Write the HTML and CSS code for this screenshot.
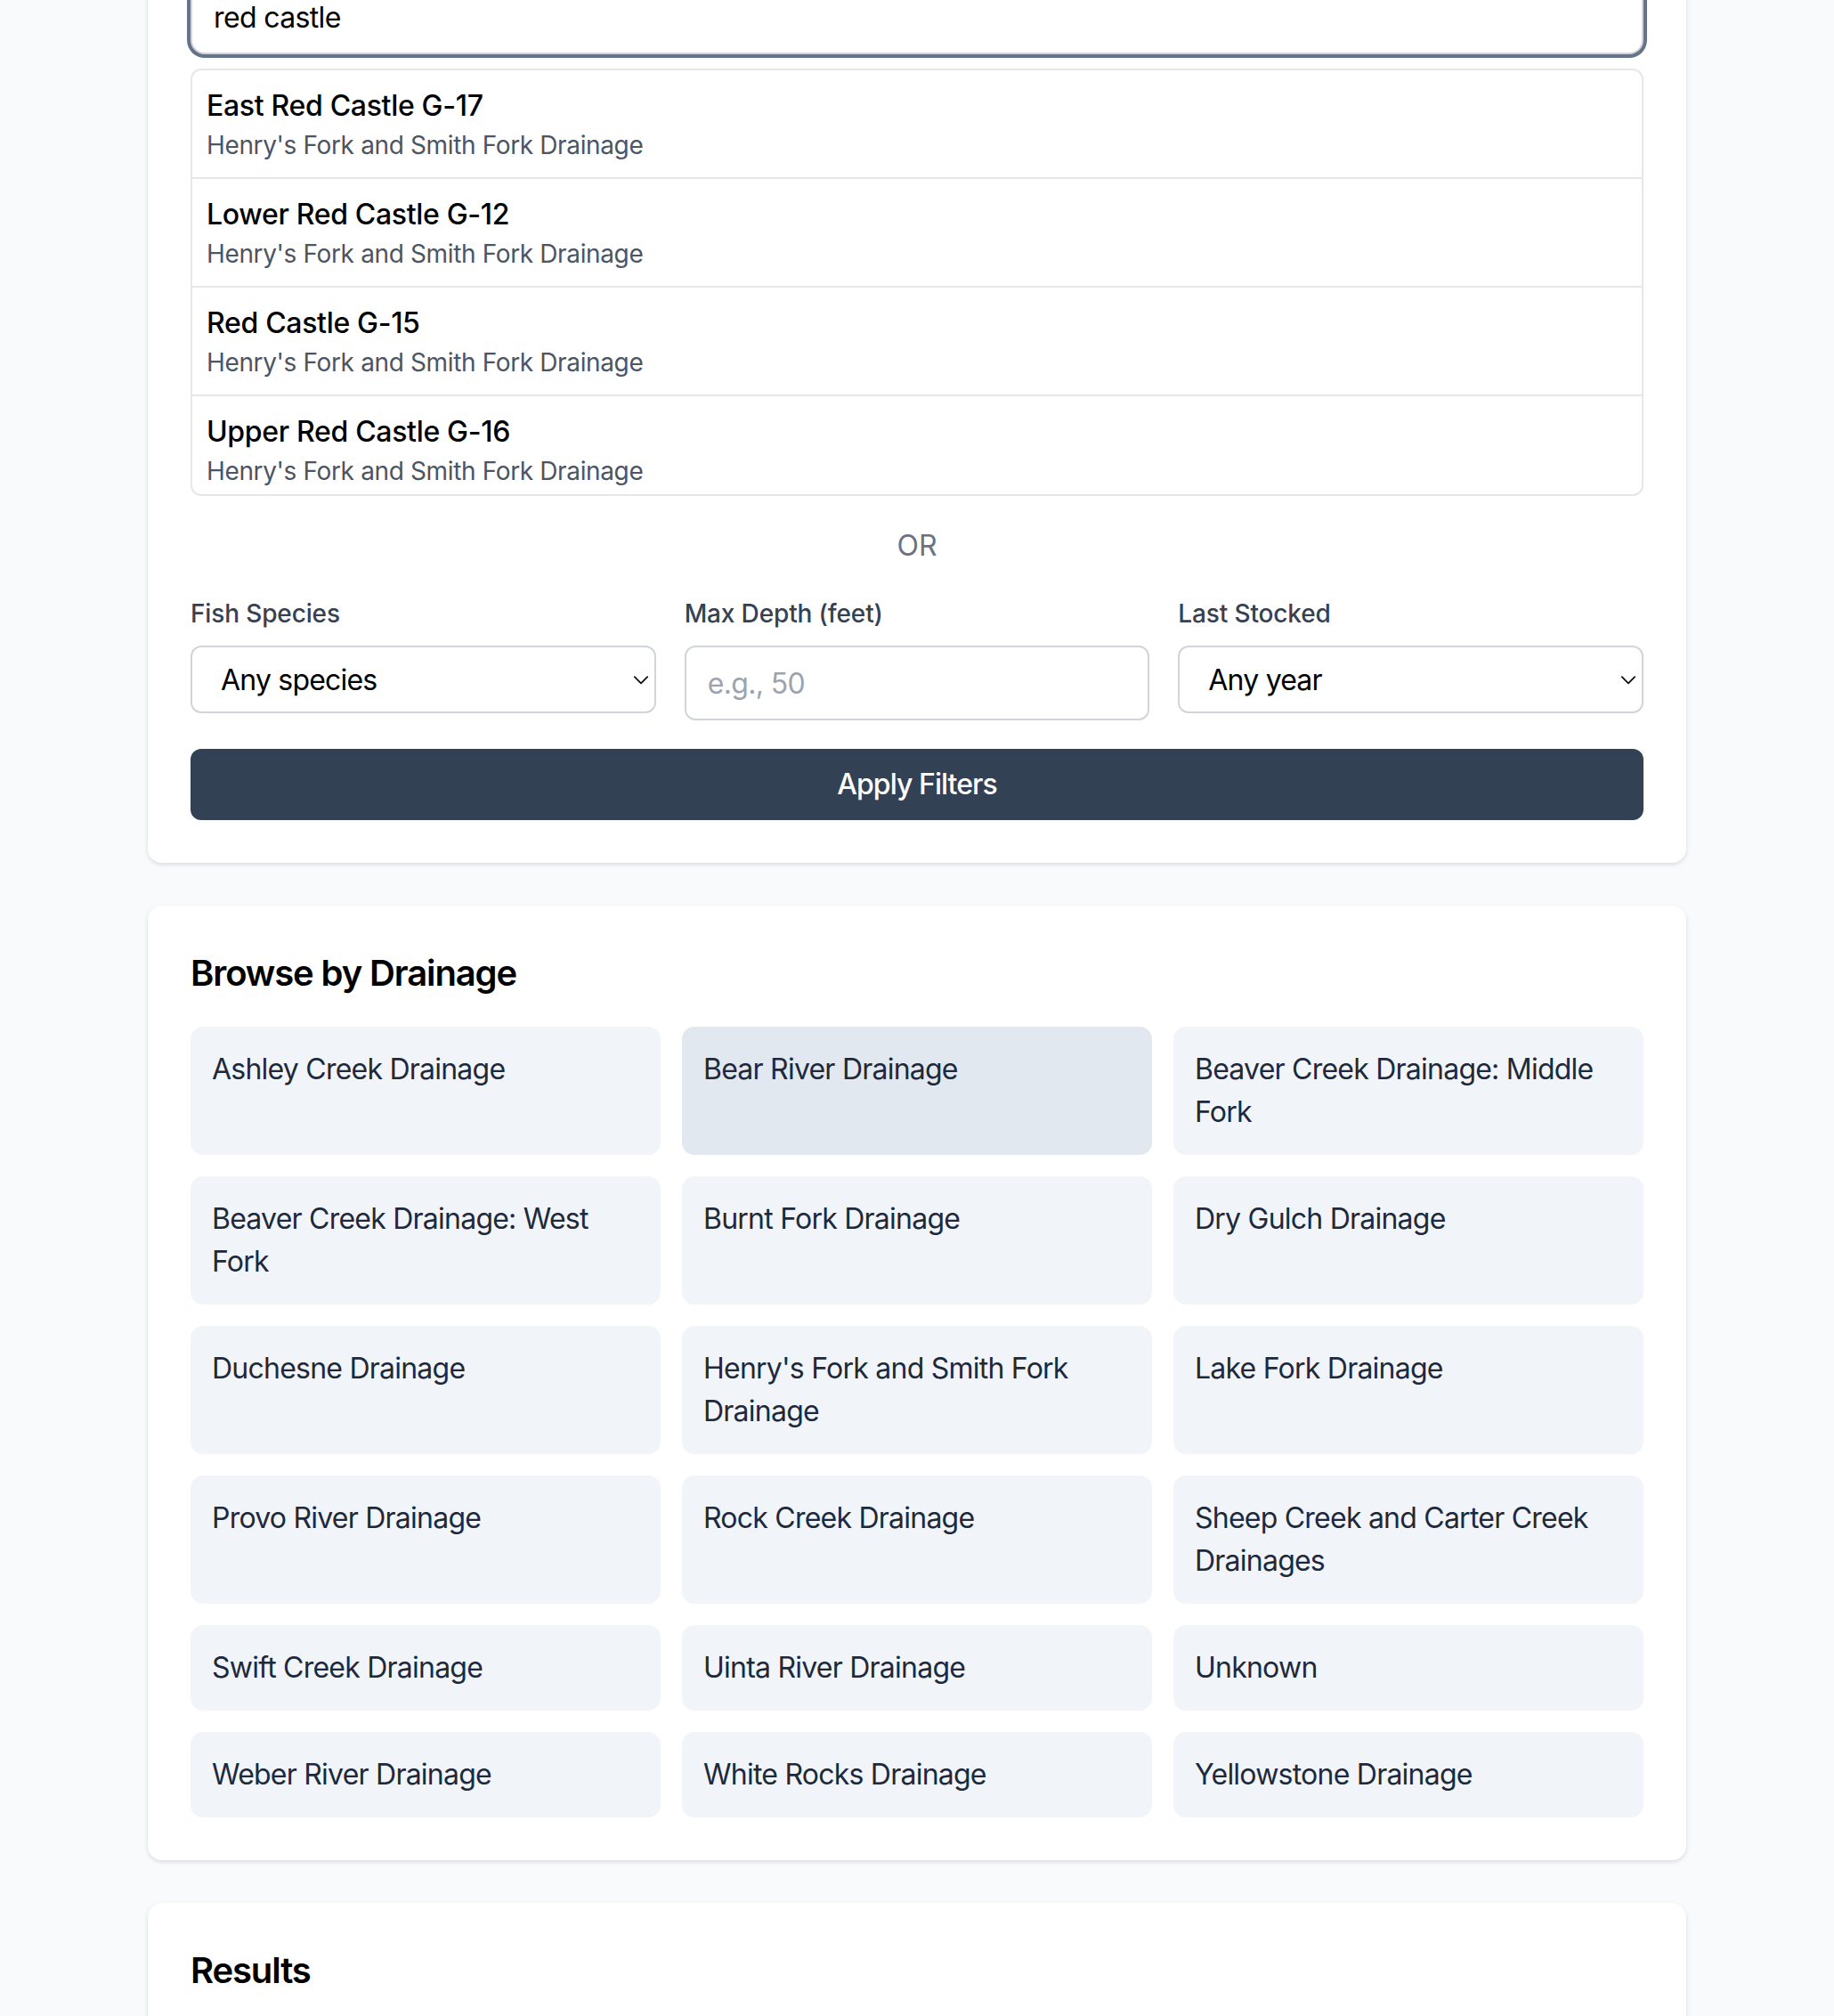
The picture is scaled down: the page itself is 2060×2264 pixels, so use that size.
FILE: index.html
```html
<!DOCTYPE html>
<html lang="en">
<head>
<meta charset="utf-8">
<title>Lake Finder</title>
<link rel="stylesheet" href="styles.css">
</head>
<body>
<div class="page">
  <main class="container">
    <section class="card card-search">
      <div class="search-box">
        <input class="search-input" type="text" value="red castle" aria-label="Search lakes">
        <ul class="suggestions">
          <li class="suggestion">
            <div class="suggestion-name">East Red Castle G-17</div>
            <div class="suggestion-drainage">Henry's Fork and Smith Fork Drainage</div>
          </li>
          <li class="suggestion">
            <div class="suggestion-name">Lower Red Castle G-12</div>
            <div class="suggestion-drainage">Henry's Fork and Smith Fork Drainage</div>
          </li>
          <li class="suggestion">
            <div class="suggestion-name">Red Castle G-15</div>
            <div class="suggestion-drainage">Henry's Fork and Smith Fork Drainage</div>
          </li>
          <li class="suggestion">
            <div class="suggestion-name">Upper Red Castle G-16</div>
            <div class="suggestion-drainage">Henry's Fork and Smith Fork Drainage</div>
          </li>
        </ul>
      </div>

      <div class="or">OR</div>

      <div class="filters">
        <div class="field">
          <label class="field-label" for="species">Fish Species</label>
          <div class="select-wrap">
            <select id="species" class="select"><option>Any species</option></select>
            <svg class="chevron" viewBox="0 0 10 6" width="9" height="5" aria-hidden="true"><polyline points="0.7,0.7 5,5 9.3,0.7" fill="none" stroke="#111" stroke-width="1.1" stroke-linecap="round" stroke-linejoin="round"/></svg>
          </div>
        </div>
        <div class="field">
          <label class="field-label" for="depth">Max Depth (feet)</label>
          <input id="depth" class="text-input" type="text" placeholder="e.g., 50">
        </div>
        <div class="field">
          <label class="field-label" for="year">Last Stocked</label>
          <div class="select-wrap">
            <select id="year" class="select"><option>Any year</option></select>
            <svg class="chevron" viewBox="0 0 10 6" width="9" height="5" aria-hidden="true"><polyline points="0.7,0.7 5,5 9.3,0.7" fill="none" stroke="#111" stroke-width="1.1" stroke-linecap="round" stroke-linejoin="round"/></svg>
          </div>
        </div>
      </div>

      <button class="apply" type="button">Apply Filters</button>
    </section>

    <section class="card">
      <h2 class="card-title">Browse by Drainage</h2>
      <div class="drainage-grid">
        <a class="drainage">Ashley Creek Drainage</a>
        <a class="drainage is-hover">Bear River Drainage</a>
        <a class="drainage">Beaver Creek Drainage: Middle Fork</a>
        <a class="drainage">Beaver Creek Drainage: West Fork</a>
        <a class="drainage">Burnt Fork Drainage</a>
        <a class="drainage">Dry Gulch Drainage</a>
        <a class="drainage">Duchesne Drainage</a>
        <a class="drainage">Henry's Fork and Smith Fork Drainage</a>
        <a class="drainage">Lake Fork Drainage</a>
        <a class="drainage">Provo River Drainage</a>
        <a class="drainage">Rock Creek Drainage</a>
        <a class="drainage">Sheep Creek and Carter Creek Drainages</a>
        <a class="drainage">Swift Creek Drainage</a>
        <a class="drainage">Uinta River Drainage</a>
        <a class="drainage">Unknown</a>
        <a class="drainage">Weber River Drainage</a>
        <a class="drainage">White Rocks Drainage</a>
        <a class="drainage">Yellowstone Drainage</a>
      </div>
    </section>

    <section class="card card-results">
      <h2 class="card-title">Results</h2>
    </section>
  </main>
</div>
</body>
</html>
```

FILE: styles.css
```css
html, body {
  margin: 0;
  padding: 0;
}

body {
  height: 100vh;
  overflow: hidden;
  background: #f9fafb;
  font-family: Inter, "Noto Sans", "Liberation Sans", sans-serif;
  color: #111827;
}

.page {
  zoom: 2;
}

.container {
  max-width: 896px;
  margin: 0 auto;
  padding: 0 16px;
  box-sizing: border-box;
  display: flex;
  flex-direction: column;
  gap: 24px;
}

.card {
  background: #ffffff;
  border-radius: 8px;
  padding: 24px;
  box-shadow: 0 1px 3px rgba(0, 0, 0, 0.08), 0 1px 2px rgba(0, 0, 0, 0.05);
}

.card-search {
  margin-top: -35.5px;
}

.card-results {
  min-height: 80px;
}

/* search */
.search-box {
  display: flex;
  flex-direction: column;
}

.search-input {
  box-sizing: border-box;
  width: 100%;
  height: 42px;
  padding: 8px 12px;
  border: 1px solid #d1d5db;
  border-radius: 8px;
  box-shadow: 0 0 0 2px #64748b;
  font-family: inherit;
  font-size: 16px;
  line-height: 24px;
  letter-spacing: -0.02em;
  color: #000;
  outline: none;
  background: #fff;
}

.suggestions {
  list-style: none;
  margin: 8px 0 0;
  padding: 0;
  box-sizing: border-box;
  max-height: 240px;
  overflow: hidden;
  border: 1px solid #e5e7eb;
  border-radius: 6px;
  background: #fff;
}

.suggestion {
  padding: 8px;
  border-bottom: 1px solid #e5e7eb;
}

.suggestion-name {
  font-size: 16px;
  line-height: 24px;
  font-weight: 500;
  letter-spacing: -0.01em;
  color: #000;
}

.suggestion-drainage {
  font-size: 14px;
  line-height: 20px;
  letter-spacing: -0.013em;
  color: #4b5563;
}

.or {
  margin: 16px 0;
  text-align: center;
  font-size: 16px;
  line-height: 24px;
  color: #6b7280;
}

/* filters */
.filters {
  display: grid;
  grid-template-columns: repeat(3, 1fr);
  gap: 16px;
  align-items: start;
}

.field {
  display: flex;
  flex-direction: column;
}

.field-label {
  font-size: 14px;
  line-height: 20px;
  font-weight: 500;
  letter-spacing: -0.005em;
  color: #374151;
  margin-bottom: 8px;
}

.select-wrap {
  position: relative;
}

.select {
  appearance: none;
  -webkit-appearance: none;
  box-sizing: border-box;
  width: 100%;
  height: 38px;
  padding: 0 28px 0 16px;
  border: 1px solid #d1d5db;
  border-radius: 6px;
  background: #fff;
  font-family: inherit;
  font-size: 16px;
  letter-spacing: -0.025em;
  color: #000;
}

.chevron {
  position: absolute;
  right: 4px;
  top: 17px;
  pointer-events: none;
}

.text-input {
  box-sizing: border-box;
  width: 100%;
  height: 42px;
  padding: 8px 12px;
  border: 1px solid #d1d5db;
  border-radius: 6px;
  font-family: inherit;
  font-size: 16px;
  line-height: 24px;
  letter-spacing: -0.02em;
  color: #000;
  background: #fff;
}

.text-input::placeholder {
  color: #9ca3af;
}

.apply {
  margin-top: 16px;
  width: 100%;
  height: 40px;
  border: none;
  border-radius: 6px;
  background: #334155;
  color: #fff;
  font-family: inherit;
  font-size: 16px;
  font-weight: 500;
  line-height: 24px;
  letter-spacing: -0.03em;
}

/* browse */
.card-title {
  margin: 0 0 16px;
  font-size: 20px;
  line-height: 28px;
  font-weight: 600;
  letter-spacing: -0.028em;
  color: #000;
}

.drainage-grid {
  display: grid;
  grid-template-columns: repeat(3, 1fr);
  gap: 12px;
}

.drainage {
  display: block;
  padding: 12px;
  border-radius: 7px;
  background: #f1f5f9;
  font-size: 16px;
  line-height: 24px;
  letter-spacing: -0.024em;
  color: #1e293b;
  text-decoration: none;
}

.drainage.is-hover {
  background: #e2e8f0;
}
```
